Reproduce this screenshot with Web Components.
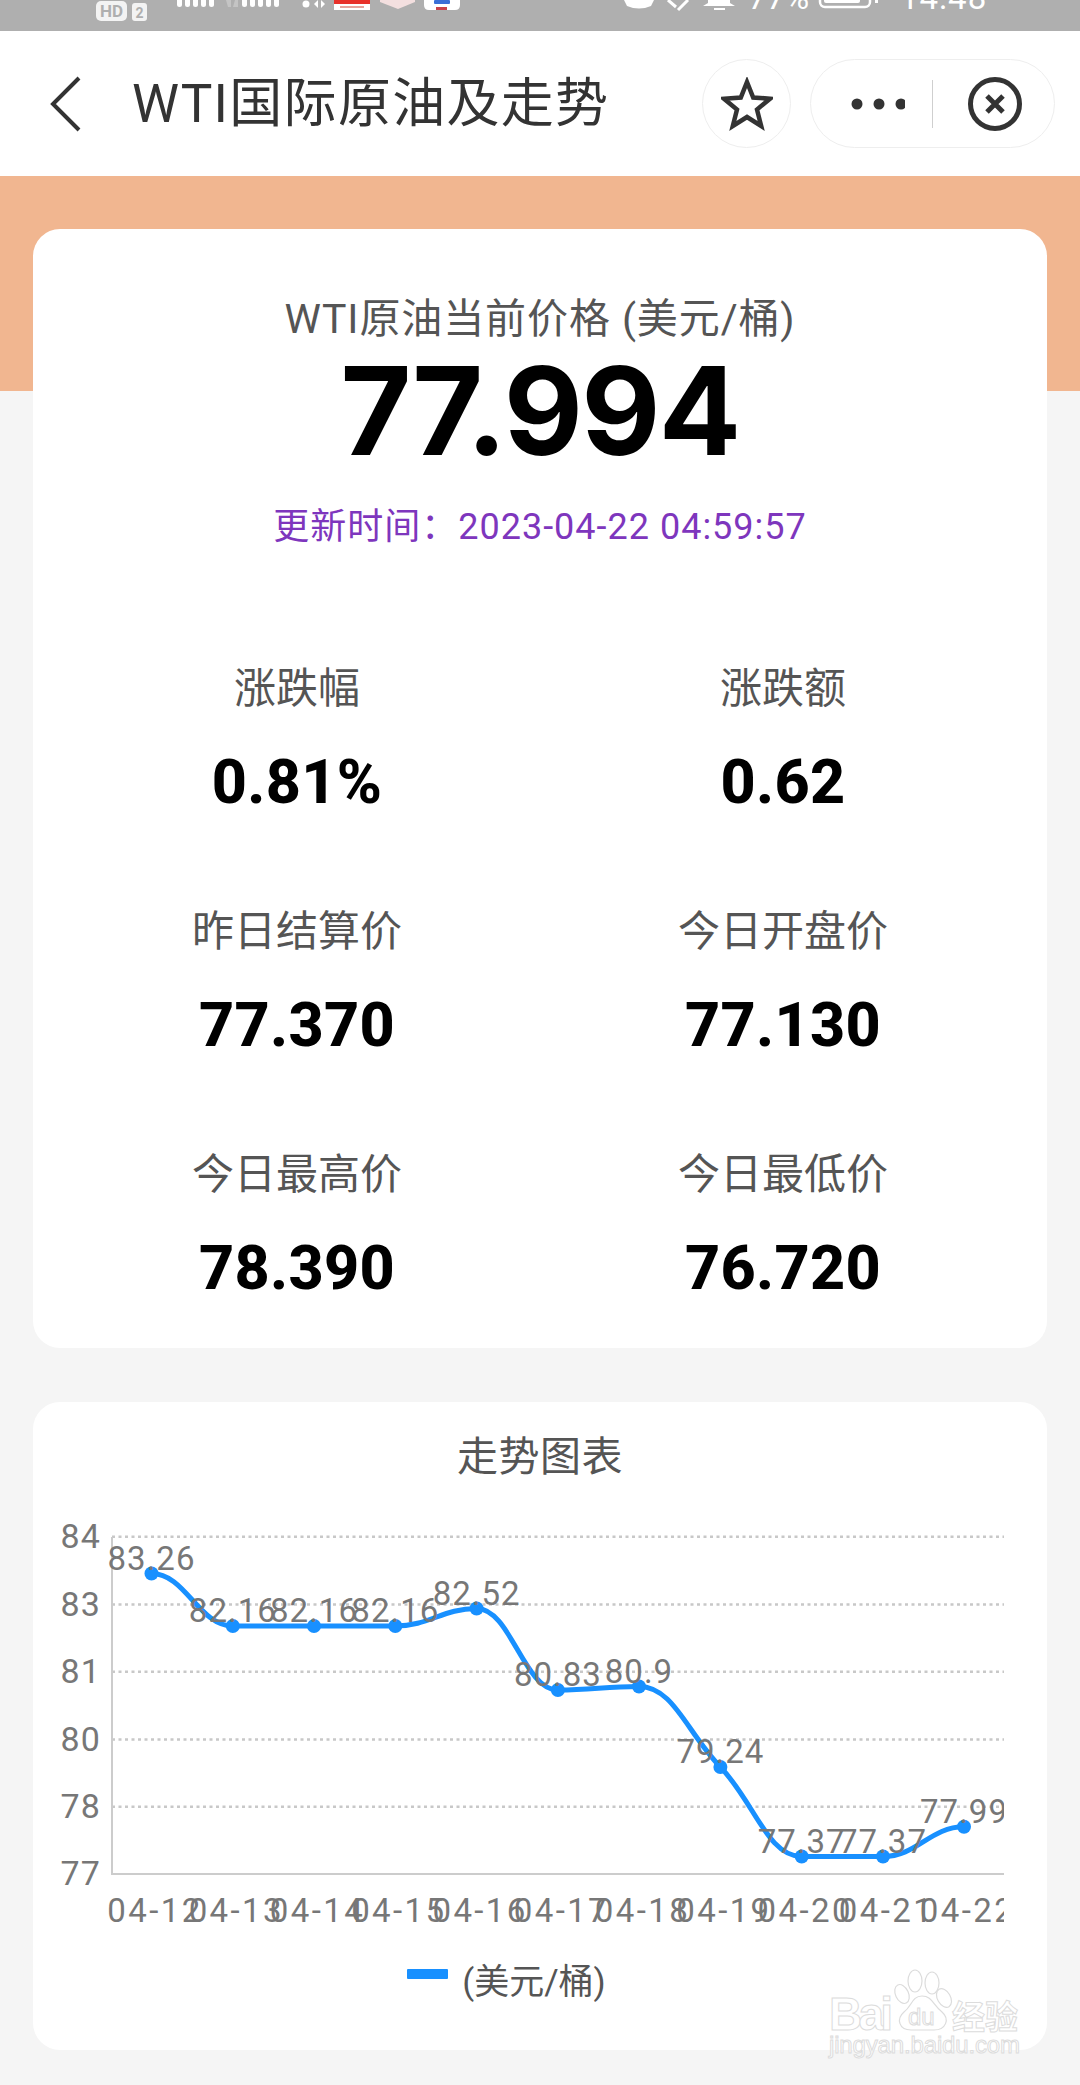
<!DOCTYPE html>
<html lang="zh">
<head>
<meta charset="utf-8">
<title>WTI国际原油及走势</title>
<style>
    html, body { margin: 0; padding: 0; background: #f5f5f5; }
    body { width: 1080px; height: 2085px; overflow: hidden; position: relative; font-family: Roboto, "Noto Sans CJK SC", sans-serif; }
</style>
</head>
<body>
<status-bar></status-bar>
<nav-bar>WTI国际原油及走势</nav-bar>
<wti-page>
    <price-card>
        <span slot="title">WTI原油当前价格 (美元/桶)</span>
        <span slot="price">77.994</span>
        <span slot="time">更新时间：2023-04-22 04:59:57</span>
        <stat-item label="涨跌幅" value="0.81%"></stat-item>
        <stat-item label="涨跌额" value="0.62"></stat-item>
        <stat-item label="昨日结算价" value="77.370"></stat-item>
        <stat-item label="今日开盘价" value="77.130"></stat-item>
        <stat-item label="今日最高价" value="78.390"></stat-item>
        <stat-item label="今日最低价" value="76.720"></stat-item>
    </price-card>
    <trend-chart></trend-chart>
</wti-page>
<baidu-mark></baidu-mark>

<script>
// 顶部状态栏 (截图里上半部分被裁掉了)
class StatusBar extends HTMLElement {
    constructor() {
        super();
        this.attachShadow({ mode: 'open' });
        const bars = (x) => [0, 8, 16, 24, 32].map((d) => `<rect x="${x + d}" y="-6" width="5" height="13" rx="2.5"/>`).join('');
        this.shadowRoot.innerHTML = `
            <style>
                :host {
                    display: flex;
                    height: 31px;
                    background: #afafaf;
                    overflow: hidden;
                    color: #fff;
                    font-family: Roboto, sans-serif;
                    align-items: flex-start;
                }
                svg { display: block; flex: none; }
                .txt { font-size: 33px; line-height: 32px; margin-top: -18px; flex: none; }
            </style>
            <svg width="470" height="31" style="margin-left:90px" viewBox="90 0 470 31">
                <rect x="96" y="1" width="31" height="20" rx="5" fill="#f3f3f3"/>
                <text x="111.5" y="17" font-size="17" font-weight="700" text-anchor="middle" fill="#afafaf" font-family="Roboto">HD</text>
                <rect x="132" y="3" width="15" height="18" rx="3" fill="#f3f3f3"/>
                <text x="139.5" y="18" font-size="14" font-weight="700" text-anchor="middle" fill="#afafaf" font-family="Roboto">2</text>
                <g fill="#fff">${bars(177)}</g>
                <path d="M226 0h5v7h-3zM233 7h5V0h-3z" fill="#c4c4c4"/>
                <g fill="#fff">${bars(242)}</g>
                <circle cx="306" cy="4" r="3.5" fill="#fff"/>
                <path d="M318 0v8l-4-4zM321 8V0l4 4z" fill="#fff"/>
                <rect x="334" y="0" width="36" height="10" fill="#fff"/>
                <rect x="334" y="0" width="36" height="4" fill="#e8312a"/>
                <rect x="340" y="6" width="24" height="2" fill="#e6a49c"/>
                <path d="M380 0h35v2l-17 7-18-7z" fill="#f3dfdf"/>
                <path d="M424 0h36v5q0 5-5 5h-26q-5 0-5-5z" fill="#fff"/>
                <rect x="434" y="0" width="16" height="4" rx="1" fill="#3b6fd6"/>
                <rect x="436" y="7" width="11" height="3" fill="#c8434a"/>
            </svg>
            <svg width="67" height="31" style="margin-left:63px" viewBox="623 0 67 31">
                <path d="M624 0h30l-3 6q-12 5-24 0z" fill="#fff"/>
                <path d="M668 0l8 7M688 0l-10 10" stroke="#fff" stroke-width="3" fill="none"/>
            </svg>
            <svg width="33" height="31" style="margin-left:13px" viewBox="703 0 33 31">
                <path d="M708 0h22v3l5 3h-32l5-3z" fill="#fff"/>
                <rect x="714" y="8" width="11" height="2" fill="#fff"/>
            </svg>
            <span class="txt" style="margin-left:12px;width:70px">77%</span>
            <svg width="62" height="31" viewBox="818 0 62 31">
                <rect x="820" y="-14" width="50" height="21" rx="5" fill="none" stroke="#fff" stroke-width="2.5"/>
                <rect x="824" y="-10" width="36" height="13" rx="2" fill="#fff"/>
                <rect x="875" y="0" width="3" height="3" fill="#fff"/>
            </svg>
            <span class="txt" style="margin-left:20px;letter-spacing:1px">14:48</span>
        `;
    }
}
customElements.define('status-bar', StatusBar);

class NavBar extends HTMLElement {
    constructor() {
        super();
        this.attachShadow({ mode: 'open' });
        this.shadowRoot.innerHTML = `
            <style>
                :host {
                    display: flex;
                    align-items: center;
                    height: 145px;
                    background: #fff;
                    box-sizing: border-box;
                    padding: 0 25px 0 49px;
                    color: #333;
                }
                .back { width: 34px; height: 56px; flex: none; }
                .title {
                    flex: 1;
                    margin-left: 49px;
                    font: 400 53px/60px Roboto, "Noto Sans CJK SC", sans-serif;
                    letter-spacing: 1.3px;
                    white-space: nowrap;
                }
                .round {
                    width: 89px;
                    height: 89px;
                    box-sizing: border-box;
                    border: 1px solid #eeeeee;
                    border-radius: 45px;
                    display: flex;
                    align-items: center;
                    justify-content: center;
                }
                .capsule {
                    width: 245px;
                    height: 89px;
                    margin-left: 19px;
                    box-sizing: border-box;
                    border: 1px solid #eeeeee;
                    border-radius: 45px;
                    display: flex;
                    align-items: center;
                    padding-left: 40px;
                }
                .line { width: 1px; height: 48px; background: #cfcfcf; margin: 0 35px 0 27px; }
                svg { display: block; flex: none; }
            </style>
            <svg class="back" viewBox="0 0 34 56"><path d="M30 2 4 28l26 26" fill="none" stroke="#333" stroke-width="4"/></svg>
            <div class="title"><slot></slot></div>
            <div class="round">
                <svg width="52" height="54" viewBox="0 0 52 54"><path d="M26 5l6.200 15.500 16.800 1.200-13 10.800 4.200 16.500L26 40l-14.200 9 4.200-16.500L3 21.700l16.800-1.200z" fill="none" stroke="#333" stroke-width="4.500" stroke-linejoin="miter"/></svg>
            </div>
            <div class="capsule">
                <svg width="54" height="12" viewBox="0 0 54 12" fill="#333"><circle cx="6" cy="6" r="5.500"/><circle cx="28" cy="6" r="5.500"/><circle cx="50" cy="6" r="5.500"/></svg>
                <div class="line"></div>
                <svg width="54" height="54" viewBox="0 0 54 54" fill="none" stroke="#333"><circle cx="27" cy="27" r="24.500" stroke-width="5"/><path d="M19 19l16 16M35 19 19 35" stroke-width="5"/></svg>
            </div>
        `;
    }
}
customElements.define('nav-bar', NavBar);

// 橙色背景只占顶部 215px
class WtiPage extends HTMLElement {
    constructor() {
        super();
        this.attachShadow({ mode: 'open' });
        this.shadowRoot.innerHTML = `
            <style>
                :host {
                    display: flex;
                    flex-direction: column;
                    gap: 54px;
                    padding: 53px 33px 0;
                    background: linear-gradient(#f1b690 215px, #f5f5f5 215px);
                }
            </style>
            <slot></slot>
        `;
    }
}
customElements.define('wti-page', WtiPage);

class PriceCard extends HTMLElement {
    constructor() {
        super();
        this.attachShadow({ mode: 'open' });
        this.shadowRoot.innerHTML = `
            <style>
                :host {
                    display: block;
                    height: 1119px;
                    box-sizing: border-box;
                    background: #fff;
                    border-radius: 27px;
                    padding: 60px 21px 0;
                    text-align: center;
                    font-family: Roboto, "Noto Sans CJK SC", sans-serif;
                }
                .title { font-size: 41px; line-height: 60px; color: #555; letter-spacing: 0.9px; }
                .price {
                    height: 124px;
                    font: 700 122px/124px Inter, Roboto, sans-serif;
                    letter-spacing: -1.7px;
                    color: #000;
                }
                .time { margin-top: 29px; font-size: 36px; line-height: 50px; color: #7e36bd; letter-spacing: 1px; }
                .grid {
                    margin-top: 107px;
                    display: grid;
                    grid-template-columns: 1fr 1fr;
                    row-gap: 90px;
                }
            </style>
            <div class="title"><slot name="title"></slot></div>
            <div class="price"><slot name="price"></slot></div>
            <div class="time"><slot name="time"></slot></div>
            <div class="grid"><slot></slot></div>
        `;
    }
}
customElements.define('price-card', PriceCard);

class StatItem extends HTMLElement {
    constructor() {
        super();
        this.attachShadow({ mode: 'open' });
        this.shadowRoot.innerHTML = `
            <style>
                :host { display: block; height: 153px; text-align: center; }
                .label { font: 400 42px/60px Roboto, "Noto Sans CJK SC", sans-serif; color: #555; }
                .value { margin-top: 33px; font: 800 61px/60px Roboto, sans-serif; letter-spacing: 0.3px; color: #000; }
            </style>
            <div class="label"></div>
            <div class="value"></div>
        `;
    }

    connectedCallback() {
        this.shadowRoot.querySelector('.label').textContent = this.getAttribute('label');
        this.shadowRoot.querySelector('.value').textContent = this.getAttribute('value');
    }
}
customElements.define('stat-item', StatItem);

// 走势图表：svg 的 viewBox 直接用页面坐标，方便对位置
class TrendChart extends HTMLElement {
    constructor() {
        super();
        this.attachShadow({ mode: 'open' });
        const points = [
            ['04-12', '83.26', 151.5, 1573.5],
            ['04-13', '82.16', 232.8, 1626],
            ['04-14', '82.16', 314, 1626],
            ['04-15', '82.16', 395.3, 1626],
            ['04-16', '82.52', 476.6, 1608.5],
            ['04-17', '80.83', 557.9, 1690],
            ['04-18', '80.9', 639, 1686.5],
            ['04-19', '79.24', 720.4, 1767],
            ['04-20', '77.37', 801.7, 1856.5],
            ['04-21', '77.37', 883, 1856.5],
            ['04-22', '77.99', 964, 1826.8]
        ];
        const grid = [['84', 1536.7], ['83', 1604.5], ['81', 1671.7], ['80', 1739.4], ['78', 1806.7]];

        const gridMarks = grid.map(([v, y]) => `
            <line x1="112" x2="1004" y1="${y}" y2="${y}" stroke="#c8c8c8" stroke-width="2.500" stroke-dasharray="3 3.500"/>
            <text x="101" y="${y + 11.5}" text-anchor="end" class="axis yl">${v}</text>`).join('');
        const xLabels = points.map(p => `<text x="${p[2] + 3.5}" y="1922" text-anchor="middle" class="axis xl">${p[0]}</text>`).join('');
        const dataLabels = points.map(p => `<text x="${p[2]}" y="${p[3] - 4}" text-anchor="middle" class="axis dl">${p[1]}</text>`).join('');
        const dots = points.map(p => `<circle cx="${p[2]}" cy="${p[3]}" r="7" fill="#1890ff"/>`).join('');

        this.shadowRoot.innerHTML = `
            <style>
                :host {
                    display: block;
                    height: 648px;
                    box-sizing: border-box;
                    background: #fff;
                    border-radius: 27px;
                    padding-top: 30px;
                    font-family: Roboto, "Noto Sans CJK SC", sans-serif;
                }
                .title { font-size: 41px; line-height: 50px; text-align: center; color: #555; letter-spacing: 0.5px; }
                svg { display: block; margin-top: 18px; }
                .axis { font-size: 33px; fill: #777; font-family: Roboto, sans-serif; }
                .dl { letter-spacing: 1px; }
                .xl { letter-spacing: 2.4px; }
                .yl { font-size: 34px; letter-spacing: 1.2px; }
                .legend {
                    display: flex;
                    align-items: center;
                    justify-content: center;
                    gap: 14px;
                    height: 44px;
                    margin-top: 4px;
                    padding-right: 67px;
                    font-size: 35px;
                    color: #555;
                }
                .swatch { width: 41px; height: 10px; background: #1890ff; border-radius: 1px; margin-top: -8px; }
            </style>
            <div class="title">走势图表</div>
            <svg width="1014" height="452" viewBox="33 1500 1014 452">
                <defs><clipPath id="plot"><rect x="33" y="1500" width="971" height="452"/></clipPath></defs>
                <g clip-path="url(#plot)">
                    ${gridMarks}
                    <path d="M112 1537V1874H1004" fill="none" stroke="#cccccc" stroke-width="2"/>
                    <text x="101" y="1885" text-anchor="end" class="axis yl">77</text>
                    <path d="${this.curve(points)}" fill="none" stroke="#1890ff" stroke-width="5"/>
                    ${dots}
                    ${dataLabels}
                    ${xLabels}
                </g>
            </svg>
            <div class="legend"><span class="swatch"></span><span>(美元/桶)</span></div>
        `;
    }

    // 单调三次曲线，拐点处切线放平
    curve(points) {
        const xy = points.map(p => [p[2], p[3]]);
        const slope = xy.map((p, i) => {
            if (i === 0 || i === xy.length - 1) return 0;
            const a = (p[1] - xy[i - 1][1]) / (p[0] - xy[i - 1][0]);
            const b = (xy[i + 1][1] - p[1]) / (xy[i + 1][0] - p[0]);
            if (a * b <= 0) return 0;
            return 2 * a * b / (a + b);
        });
        let d = `M${xy[0][0]} ${xy[0][1]}`;
        for (let i = 1; i < xy.length; i++) {
            const [x0, y0] = xy[i - 1];
            const [x1, y1] = xy[i];
            const h = (x1 - x0) * 0.42;
            d += `C${x0 + h} ${y0 + slope[i - 1] * h} ${x1 - h} ${y1 - slope[i] * h} ${x1} ${y1}`;
        }
        return d;
    }
}
customElements.define('trend-chart', TrendChart);

// 右下角百度经验水印，盖在内容上面
class BaiduMark extends HTMLElement {
    constructor() {
        super();
        this.attachShadow({ mode: 'open' });
        this.shadowRoot.innerHTML = `
            <style>
                :host { display: block; position: absolute; left: 820px; top: 1960px; width: 210px; height: 100px; pointer-events: none; }
                svg { display: block; }
                text { fill: #fff; stroke: #dcdcdc; stroke-width: 1; }
            </style>
            <svg width="210" height="100" viewBox="820 1960 210 100">
                <g fill="#fff" stroke="#dcdcdc" stroke-width="1.200">
                    <ellipse cx="915" cy="1981" rx="7" ry="11"/>
                    <ellipse cx="932" cy="1983" rx="7" ry="11"/>
                    <ellipse cx="902" cy="1994" rx="6.500" ry="10" transform="rotate(-25 902 1994)"/>
                    <ellipse cx="944" cy="1998" rx="6.500" ry="10" transform="rotate(-30 944 1998)"/>
                    <path d="M922 1996c10 0 11 9 20 16 8 7 4 18-8 18h-23c-12 0-15-11-7-18 8-6 8-16 18-16z"/>
                </g>
                <text x="829" y="2030" font-size="46" font-weight="700" font-family="Liberation Sans" textLength="64">Bai</text>
                <text x="908" y="2025" font-size="24" font-family="Liberation Sans">du</text>
                <text x="952" y="2029" font-size="33" font-weight="700" font-family="Noto Sans CJK SC">经验</text>
                <text x="829" y="2053" font-size="24" font-family="Liberation Sans" textLength="191">jingyan.baidu.com</text>
            </svg>
        `;
    }
}
customElements.define('baidu-mark', BaiduMark);
</script>
</body>
</html>
